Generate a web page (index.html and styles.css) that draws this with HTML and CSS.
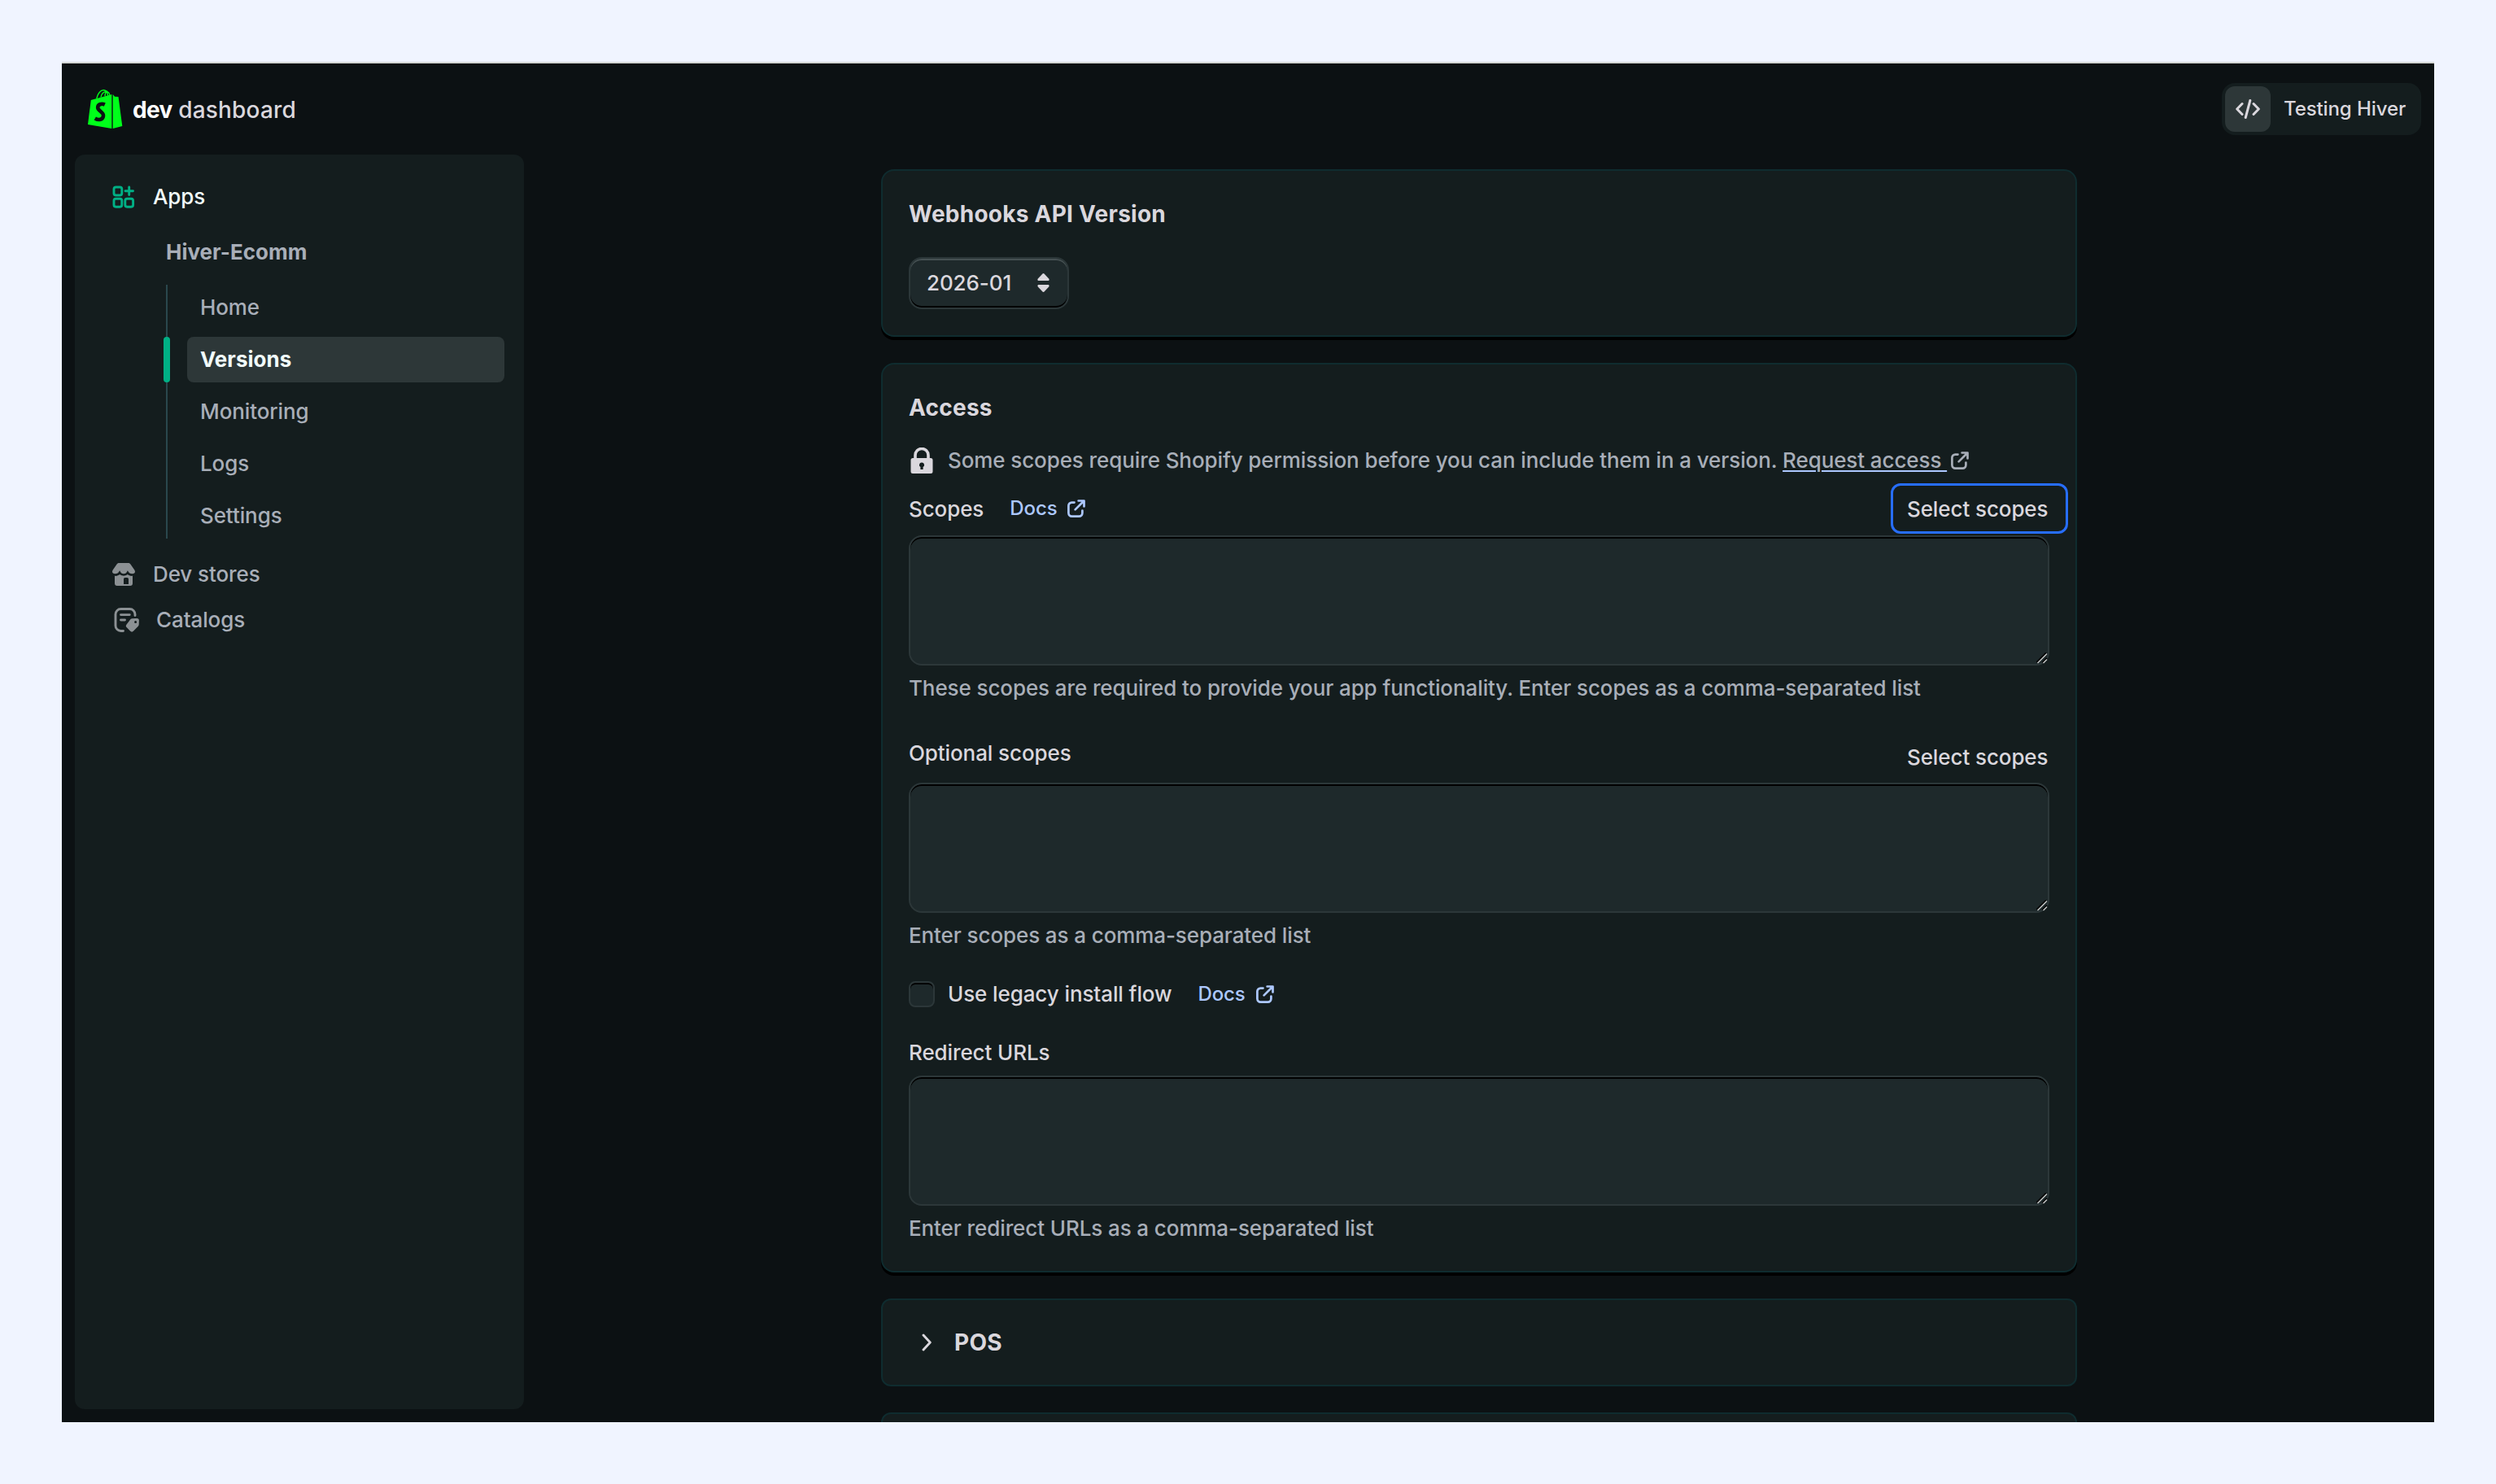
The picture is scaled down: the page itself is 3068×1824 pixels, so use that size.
FILE: index.html
```html
<!DOCTYPE html>
<html lang="en">
<head>
    <meta charset="UTF-8">
    <meta name="viewport" content="width=device-width, initial-scale=1.0">
    <title>Dev dashboard</title>
    <link rel="stylesheet" href="styles.css">
</head>
<body>
    <svg class="defs" width="0" height="0">
        <symbol id="external" viewBox="0 0 22 22">
            <path d="M8.5 3.6H5.4a4 4 0 0 0-4 4v9a4 4 0 0 0 4 4h9a4 4 0 0 0 4-4v-3.1M13.6 1.5h6.9v6.9M20 2 9.6 12.4" fill="none" stroke="currentColor" stroke-width="2.7" stroke-linecap="round" stroke-linejoin="round"/>
        </symbol>
        <symbol id="grip" viewBox="0 0 14 14">
            <path d="M.5 12 12 .5M7.500 12.500 13 7" fill="none" stroke="#000" stroke-width="2"/>
            <path d="M1.500 13 13 1.500M8.500 13 13 8.500" fill="none" stroke="#c4c6c6" stroke-width="1.5"/>
        </symbol>
    </svg>

    <div class="window">
        <header class="topbar">
            <div class="brand">
                <svg class="logo" width="43" height="48" viewBox="0 0 43 48">
                    <path d="M3.800 13 29.300 6v42L0 43z" fill="#00ff1a"/>
                    <path d="M30.700 6 33 8.700l4.500.3L42.300 45l-11.600 3z" fill="#00ff1a"/>
                    <path d="M10.800 11C12 4.500 16 .8 19.200.8c3 0 5 2.600 5.300 6.700M16 9.500C16.800 5 19.800 2.600 22.300 2.600c2.700 0 4.200 1.900 4.400 4.400M21 8c.3-3.500 1.500-5.600 3-6" fill="none" stroke="#00ff1a" stroke-width="1.400"/>
                    <path d="M20.800 18.600c-4-1.900-8.800-.3-8.600 3.700.2 4.200 7.300 5 6.800 10.200-.5 4.600-5.600 5.800-10.200 3" fill="none" stroke="#0c1113" stroke-width="4.600"/>
                </svg>
                <span class="brand-name"><b>dev</b> dashboard</span>
            </div>
            <div class="account">
                <span class="account-icon">
                    <svg width="30" height="24" viewBox="0 0 30 24">
                        <path d="M8 5.500 1.700 12 8 18.500M22 5.500l6.300 6.500-6.300 6.500M17.800 1.500l-5.600 21" fill="none" stroke="currentColor" stroke-width="3" stroke-linecap="round" stroke-linejoin="round"/>
                    </svg>
                </span>
                <span class="account-name">Testing Hiver</span>
            </div>
        </header>

        <div class="content">
            <nav class="sidebar">
                <a class="nav-item nav-current">
                    <svg width="28" height="28" viewBox="0 0 28 28">
                        <g fill="none" stroke="#00b085" stroke-width="2.900" stroke-linecap="round">
                            <rect x="2" y="2" width="9.800" height="10" rx="2.500"/>
                            <rect x="2" y="16.200" width="9.800" height="10" rx="2.500"/>
                            <rect x="15.800" y="16.200" width="9.800" height="10" rx="2.500"/>
                            <path d="M20.700 2v9.500M16 6.800h9.500"/>
                        </g>
                    </svg>
                    <span>Apps</span>
                </a>
                <div class="app-name">Hiver-Ecomm</div>
                <div class="subnav">
                    <a class="subnav-item">Home</a>
                    <a class="subnav-item active">Versions</a>
                    <a class="subnav-item">Monitoring</a>
                    <a class="subnav-item">Logs</a>
                    <a class="subnav-item">Settings</a>
                </div>
                <a class="nav-item">
                    <svg width="28" height="28" viewBox="0 0 28 28">
                        <path d="M8.500 0h11c1.400 0 2.400.6 3.100 1.700l4.500 6.600c.6.900.9 1.700.9 2.500 0 1.400-1.400 2.500-3.300 2.500-2.600 0-4.200-1-5.800-4-1.500 3-2.800 4-4.900 4s-3.400-1-4.900-4c-1.600 3-3.100 4-5.800 4-1.900 0-3.300-1.100-3.300-2.500 0-.8.300-1.600.9-2.500l4.500-6.600C6.100.6 7.100 0 8.500 0z" fill="#8c9194"/>
                        <path fill-rule="evenodd" d="M3 15.800c2.600.3 4.500-.3 6.200-1.700 3 2.300 6.600 2.300 9.600 0 1.700 1.400 3.600 2 6.200 1.700V25a3 3 0 0 1-3 3H6a3 3 0 0 1-3-3zM14 20v6h6v-6.200a1.800 1.800 0 0 0-1.800-1.800h-2.400A1.800 1.800 0 0 0 14 20z" fill="#8c9194"/>
                    </svg>
                    <span>Dev stores</span>
                </a>
                <a class="nav-item nav-catalogs">
                    <svg width="32" height="30" viewBox="0 0 32 30">
                        <path d="M26 9.500V8a6.500 6.500 0 0 0-6.500-6.500h-11A6.500 6.500 0 0 0 2 8v14a6.500 6.500 0 0 0 6.500 6.500h3M8.500 8.600h10.800M8.500 15h5" fill="none" stroke="#8c9194" stroke-width="2.900" stroke-linecap="round"/>
                        <path fill-rule="evenodd" d="M22.500 13.300 28 13a2.800 2.800 0 0 1 2.900 2.900l-.2 4.900c0 .8-.4 1.500-.9 2l-5.900 6c-1.100 1.100-2.600 1.100-3.700 0l-4.600-4.700c-1.100-1.100-1.100-2.600 0-3.700l4.900-6.300c.6-.5 1.200-.8 2-.8zM26.600 16.100a1.500 1.500 0 1 0 0 3 1.500 1.500 0 0 0 0-3z" fill="#8c9194"/>
                    </svg>
                    <span>Catalogs</span>
                </a>
            </nav>

            <main class="main">
                <section class="card">
                    <h2>Webhooks API Version</h2>
                    <div class="select">
                        <span>2026-01</span>
                        <svg width="15" height="23" viewBox="0 0 15 23">
                            <path d="M6 .9a2 2 0 0 1 3 0l5.200 5.700c.8 1 .4 2.400-.9 2.400H1.700C.4 9 0 7.600.8 6.600zM6 22.100a2 2 0 0 0 3 0l5.200-5.700c.8-1 .4-2.400-.9-2.400H1.700c-1.300 0-1.700 1.400-.9 2.400z" fill="currentColor"/>
                        </svg>
                    </div>
                </section>

                <section class="card">
                    <h2>Access</h2>
                    <div class="notice">
                        <svg width="28" height="32" viewBox="0 0 28 32">
                            <path d="M6 15V9.500a8 8 0 0 1 16 0V15" fill="none" stroke="#dad7dd" stroke-width="3.600"/>
                            <path fill-rule="evenodd" d="M3 13h22a2.500 2.500 0 0 1 2.500 2.500v14A2.500 2.500 0 0 1 25 32H3a2.500 2.500 0 0 1-2.500-2.500v-14A2.500 2.500 0 0 1 3 13zm11 5.500a3 3 0 0 0-1.600 5.600V27h3.200v-2.900a3 3 0 0 0-1.600-5.600z" fill="#dad7dd"/>
                        </svg>
                        <span class="notice-text">Some scopes require Shopify permission before you can include them in a version. <a class="request">Request access&nbsp;</a></span>
                        <svg class="request-icon" width="22" height="22"><use href="#external"/></svg>
                    </div>

                    <div class="field-head first">
                        <label for="scopes">Scopes</label>
                        <a class="docs">Docs <svg width="22" height="22"><use href="#external"/></svg></a>
                        <button class="btn focused">Select scopes</button>
                    </div>
                    <div class="area">
                        <textarea id="scopes"></textarea>
                        <svg class="grip" width="14" height="14"><use href="#grip"/></svg>
                    </div>
                    <p class="help">These scopes are required to provide your app functionality. Enter scopes as a comma-separated list</p>

                    <div class="field-head optional">
                        <label for="optionalScopes">Optional scopes</label>
                        <button class="btn">Select scopes</button>
                    </div>
                    <div class="area">
                        <textarea id="optionalScopes"></textarea>
                        <svg class="grip" width="14" height="14"><use href="#grip"/></svg>
                    </div>
                    <p class="help">Enter scopes as a comma-separated list</p>

                    <div class="check-row">
                        <input type="checkbox" id="legacy">
                        <label for="legacy">Use legacy install flow</label>
                        <a class="docs">Docs <svg width="22" height="22"><use href="#external"/></svg></a>
                    </div>

                    <div class="field-head redirect">
                        <label for="redirects">Redirect URLs</label>
                    </div>
                    <div class="area">
                        <textarea id="redirects"></textarea>
                        <svg class="grip" width="14" height="14"><use href="#grip"/></svg>
                    </div>
                    <p class="help">Enter redirect URLs as a comma-separated list</p>
                </section>

                <section class="card collapsed">
                    <svg width="12" height="22" viewBox="0 0 12 22">
                        <path d="M2 2l8.300 9L2 20" fill="none" stroke="currentColor" stroke-width="2.900" stroke-linecap="round" stroke-linejoin="round"/>
                    </svg>
                    <h2>POS</h2>
                </section>

                <section class="card collapsed"></section>
            </main>
        </div>
    </div>
</body>
</html>
```
FILE: styles.css
```css
* {
    box-sizing: border-box;
}
body {
    margin: 0;
    padding: 76px;
    height: 1824px;
    overflow: hidden;
    background: #f0f4ff;
    font-family: Inter, "Liberation Sans", sans-serif;
    font-size: 26px;
    font-weight: 450;
    letter-spacing: -0.1px;
    line-height: 40px;
    color: #dad7dd;
}
svg {
    display: block;
    flex: none;
}
.defs {
    position: absolute;
}
.window {
    height: 1672px;
    overflow: hidden;
    background: #0c1113;
    border-top: 2px solid #d5d7d4;
}

/* top bar */
.topbar {
    display: flex;
    justify-content: space-between;
    align-items: center;
    height: 112px;
    padding: 0 16px 0 32px;
}
.brand {
    display: flex;
    align-items: center;
    gap: 12px;
}
.brand-name {
    padding-top: 1px;
    font-size: 28px;
    letter-spacing: 0.2px;
}
.brand-name b {
    color: #fff;
    font-weight: 700;
    letter-spacing: -0.7px;
}
.account {
    display: flex;
    align-items: center;
    width: 245px;
    height: 64px;
    padding: 4px;
    border-radius: 16px;
    background: #141d1e;
}
.account-icon {
    display: flex;
    align-items: center;
    justify-content: center;
    width: 56px;
    height: 56px;
    margin-right: 16px;
    border-radius: 12px;
    background: #2d3738;
}
.account-name {
    font-size: 24px;
    white-space: nowrap;
}

/* sidebar */
.content {
    display: flex;
}
.sidebar {
    width: 552px;
    height: 1542px;
    margin-left: 16px;
    padding: 24px 24px 0 46px;
    border-radius: 12px;
    background: #141d1e;
    color: #a8aeb8;
}
.nav-item {
    display: flex;
    align-items: center;
    gap: 22px;
    height: 56px;
}
.nav-current {
    color: #f1fbfa;
}
.nav-catalogs {
    padding-left: 2px;
    gap: 20px;
}
.app-name {
    height: 56px;
    margin: 12px 0;
    padding-left: 66px;
    line-height: 56px;
    font-weight: 650;
    letter-spacing: 0;
}
.subnav {
    display: flex;
    flex-direction: column;
    gap: 8px;
    margin: 0 0 16px 66px;
    padding-left: 24px;
    border-left: 2px solid #2a484d;
}
.subnav-item {
    position: relative;
    height: 56px;
    padding-left: 16px;
    line-height: 56px;
    border-radius: 8px;
}
.subnav-item.active {
    background: #2d3738;
    color: #f1fbfa;
    font-weight: 650;
    letter-spacing: 0;
}
.subnav-item.active::before {
    content: "";
    position: absolute;
    left: -29px;
    top: 0;
    width: 8px;
    height: 56px;
    border-radius: 4px;
    background: #00b085;
}

/* cards */
.main {
    display: flex;
    flex-direction: column;
    gap: 32px;
    width: 1470px;
    margin: 18px 0 0 439px;
}
.card {
    padding: 32px;
    border: 2px solid #0f2c2f;
    border-radius: 16px;
    background: #141d1e;
    box-shadow: 0 4px 0 #000;
}
.card h2 {
    height: 40px;
    margin: 0;
    padding-top: 1px;
    font-size: 28px;
    font-weight: 700;
    letter-spacing: 0.25px;
    line-height: 40px;
}
.card.collapsed {
    display: flex;
    align-items: center;
    gap: 28px;
    height: 108px;
    padding: 0 48px;
    border-radius: 12px;
    box-shadow: none;
}
.card.collapsed h2 {
    padding-top: 0;
}
.select {
    display: flex;
    justify-content: space-between;
    align-items: center;
    width: 197px;
    height: 64px;
    margin-top: 34px;
    padding: 0 22px 1px 20px;
    border: 2px solid #2c3739;
    border-radius: 16px;
    background: #1e292b;
    box-shadow: inset 0 2px 0 #455052, inset 0 -2px 0 #000;
}
.notice {
    display: flex;
    align-items: center;
    height: 40px;
    margin-top: 26px;
    padding-left: 2px;
    color: #a8aeb8;
}
.notice-text {
    margin: 0 5px 0 18px;
}
.request {
    text-decoration: underline;
    text-decoration-color: #adc8ff;
    text-decoration-thickness: 2px;
    text-underline-offset: 3px;
}
.field-head {
    display: flex;
    align-items: center;
}
.field-head.first {
    height: 66px;
    margin-top: 6px;
}
.field-head.first label {
    padding-top: 1px;
}
.field-head.optional {
    height: 64px;
    margin-top: 32px;
}
.field-head.optional label {
    margin-bottom: 8px;
}
.field-head.redirect {
    height: 49px;
    margin-top: 31px;
    padding-bottom: 7px;
}
.docs {
    display: flex;
    align-items: center;
    gap: 13px;
    margin-left: 32px;
    font-size: 24px;
    color: #adc8ff;
}
.btn {
    width: 218px;
    height: 62px;
    margin: 0 -23px 0 auto;
    padding: 1px 0 0 17px;
    border: 3px solid transparent;
    border-radius: 12px;
    background: none;
    font: inherit;
    letter-spacing: inherit;
    color: inherit;
    text-align: left;
    white-space: nowrap;
}
.btn.focused {
    border-color: #276eff;
}
.area {
    position: relative;
}
textarea {
    display: block;
    width: 100%;
    height: 160px;
    border: 2px solid #2c3739;
    border-radius: 16px;
    background: #1e292b;
    box-shadow: inset 0 2px 0 #000;
    resize: none;
}
.grip {
    position: absolute;
    right: 2px;
    bottom: 2px;
}
.help {
    margin: 8px 0 0;
    color: #a8aeb8;
}
.check-row {
    display: flex;
    align-items: center;
    height: 40px;
    margin-top: 32px;
}
.check-row input {
    appearance: none;
    width: 32px;
    height: 32px;
    margin: 0 16px 0 0;
    border: 2px solid #2c3739;
    border-radius: 8px;
    background: #1e292b;
    box-shadow: inset 0 2px 0 #000;
}
```
